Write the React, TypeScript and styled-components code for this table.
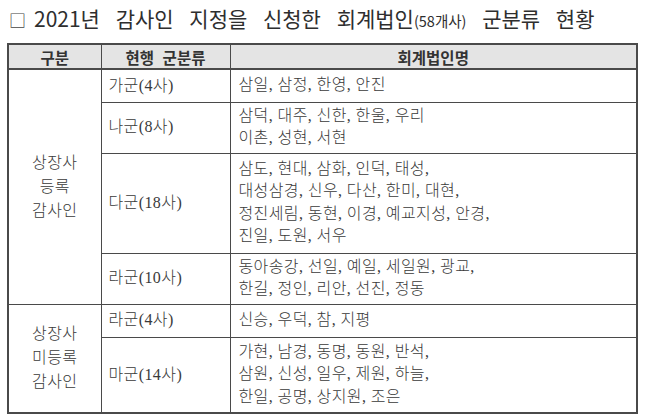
import React from 'react';
import styled, { createGlobalStyle } from 'styled-components';

const GlobalStyle = createGlobalStyle`
  html, body {
    margin: 0;
    padding: 0;
    background: #fff;
  }
  body {
    font-family: "Noto Sans CJK KR", "Noto Sans", sans-serif;
    color: #333;
  }
`;

interface Group {
  label: string[];
  rows: { name: string; height: number; firms: string[] }[];
}

const groups: Group[] = [
  {
    label: ['상장사', '등록', '감사인'],
    rows: [
      { name: '가군(4사)', height: 33, firms: ['삼일, 삼정, 한영, 안진'] },
      { name: '나군(8사)', height: 51, firms: ['삼덕, 대주, 신한, 한울, 우리', '이촌, 성현, 서현'] },
      {
        name: '다군(18사)',
        height: 100,
        firms: [
          '삼도, 현대, 삼화, 인덕, 태성,',
          '대성삼경, 신우, 다산, 한미, 대현,',
          '정진세림, 동현, 이경, 예교지성, 안경,',
          '진일, 도원, 서우',
        ],
      },
      {
        name: '라군(10사)',
        height: 51,
        firms: ['동아송강, 선일, 예일, 세일원, 광교,', '한길, 정인, 리안, 선진, 정동'],
      },
    ],
  },
  {
    label: ['상장사', '미등록', '감사인'],
    rows: [
      { name: '라군(4사)', height: 33, firms: ['신승, 우덕, 참, 지평'] },
      {
        name: '마군(14사)',
        height: 76,
        firms: ['가현, 남경, 동명, 동원, 반석,', '삼원, 신성, 일우, 제원, 하늘,', '한일, 공명, 상지원, 조은'],
      },
    ],
  },
];

function App() {
  return (
    <Page>
      <GlobalStyle />
      <Title>
        <Box>□</Box>2021년 감사인 지정을 신청한 회계법인<Small>(58개사)</Small> 군분류 현황
      </Title>
      <Table>
        <colgroup>
          <col style={{ width: 93 }} />
          <col style={{ width: 129 }} />
          <col />
        </colgroup>
        <thead>
          <tr>
            <Th>구분</Th>
            <Th>현행 군분류</Th>
            <Th>회계법인명</Th>
          </tr>
        </thead>
        <tbody>
          {groups.map((g) =>
            g.rows.map((r, i) => (
              <Row key={g.label.join() + r.name} $height={r.height}>
                {i === 0 && (
                  <GroupCell rowSpan={g.rows.length}>
                    {g.label.map((l) => (
                      <div key={l}>{l}</div>
                    ))}
                  </GroupCell>
                )}
                <ClassCell>{r.name}</ClassCell>
                <FirmCell>
                  {r.firms.map((f) => (
                    <div key={f}>{f}</div>
                  ))}
                </FirmCell>
              </Row>
            ))
          )}
        </tbody>
      </Table>
    </Page>
  );
}

const Page = styled.div`
  width: 647px;
  height: 419px;
  padding: 4px 0 0 7px;
  box-sizing: border-box;
  overflow: hidden;
`;

const Title = styled.div`
  height: 39px;
  font-size: 21px;
  line-height: 28px;
  color: #2e2e2e;
  word-spacing: 11px;
  padding-left: 2px;
  white-space: nowrap;
`;

const Box = styled.span`
  font-size: 17px;
  color: #444;
  margin-right: 8px;
`;

const Small = styled.span`
  font-size: 14.5px;
  word-spacing: 0;
`;

const Table = styled.table`
  width: 631px;
  border-collapse: collapse;
  table-layout: fixed;
  border: 2px solid #4a4a4a;
  color: #333;
`;

const Th = styled.th`
  height: 23px;
  padding: 0;
  background: #e4e4e4;
  border: 1px solid #4a4a4a;
  border-bottom-width: 2px;
  font-size: 15.5px;
  font-weight: 700;
  line-height: 20px;
  color: #333;
  word-spacing: 5px;
`;

const Row = styled.tr<{ $height: number }>`
  height: ${(p) => p.$height}px;
`;

const Cell = styled.td`
  border: 1px solid #4a4a4a;
  padding: 0 0 0 7px;
  vertical-align: middle;
  font-family: "Liberation Serif", "Noto Sans CJK KR", serif;
  font-size: 16px;
  font-weight: 300;
  line-height: 22.5px;
  letter-spacing: 0.4px;
  color: #3a3a3a;
  white-space: nowrap;
`;

const GroupCell = styled(Cell)`
  padding: 0;
  text-align: center;
  line-height: 24px;
`;

const ClassCell = styled(Cell)`
  padding-left: 7px;
`;

const FirmCell = styled(Cell)`
  padding-left: 8px;
  padding-bottom: 1px;
`;

export default App;
